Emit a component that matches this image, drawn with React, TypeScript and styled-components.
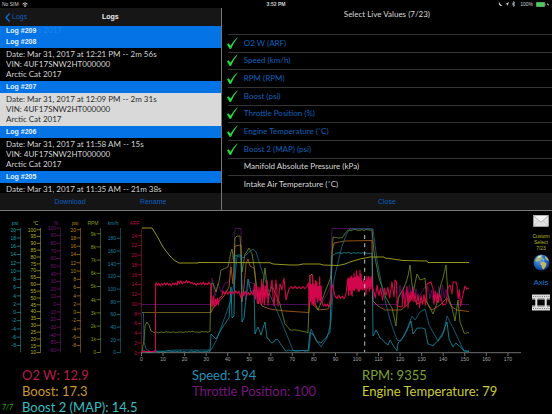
import React from "react";
import styled, { createGlobalStyle } from "styled-components";

const HUMANIST = `Lato, "Open Sans", sans-serif`;
const SANS = `"Liberation Sans", Arial, sans-serif`;

const Global = createGlobalStyle`
  * { box-sizing: border-box; }
  body { margin: 0; background: #000; color: #ddd; font-family: ${HUMANIST}; }
  button { border: 0; padding: 0; margin: 0; background: none; font: inherit; color: inherit; cursor: pointer; }
  ul { list-style: none; margin: 0; padding: 0; }
`;

const Page = styled.main`
  min-height: 100vh;
  display: flex;
  flex-direction: column;
  background: #000;
  overflow: hidden;
`;

const StatusBar = styled.header`
  display: grid;
  grid-template-columns: 1fr auto 1fr;
  align-items: center;
  height: 8px;
  padding: 0 2px;
  font: 5px/8px ${SANS};
  color: #d0d0d0;
`;

const StatusGroup = styled.div<{ $end?: boolean }>`
  display: flex;
  align-items: center;
  gap: 3px;
  justify-content: ${(p) => (p.$end ? "flex-end" : "flex-start")};
`;

const Clock = styled.time`
  font-weight: 700;
`;

const Panels = styled.div`
  display: grid;
  grid-template-columns: 2fr 3fr;
  height: 203px;
  border-bottom: 1px solid #777;
`;

const Panel = styled.section`
  display: flex;
  flex-direction: column;
  min-width: 0;
  min-height: 0;
`;

const NavBar = styled.nav`
  display: grid;
  grid-template-columns: 1fr auto 1fr;
  align-items: center;
  flex: none;
  height: 18px;
  padding: 0 5px;
  background: #161616;
  font: 7px/18px ${SANS};
`;

const BackButton = styled.button`
  display: flex;
  align-items: center;
  gap: 2px;
  color: #0b5fc0;
`;

const NavTitle = styled.h1`
  margin: 0;
  font: 700 7px/18px ${SANS};
  color: #eee;
`;

const Scroll = styled.div`
  flex: 1;
  min-height: 0;
  overflow: hidden;
`;

const LogHeading = styled.h2<{ $tucked?: boolean }>`
  margin: 0;
  height: ${(p) => (p.$tucked ? 10 : 12)}px;
  padding-left: 6px;
  background: #0373e6;
  color: #e6f1ff;
  font: 700 7px/${(p) => (p.$tucked ? 8 : 12)}px ${SANS};
`;

const Ghost = styled.span`
  font: 8px/8px ${HUMANIST};
  color: #1c84ee;
`;

const LogEntry = styled.button<{ $selected?: boolean }>`
  display: block;
  width: 100%;
  padding: 1px 6px 2px;
  text-align: left;
  white-space: nowrap;
  font: 8px/10px ${HUMANIST};
  background: ${(p) => (p.$selected ? "#d9d9d9" : "#000")};
  color: ${(p) => (p.$selected ? "#2c2c2c" : "#d4d4d4")};
`;

const Line = styled.span`
  display: block;
`;

const Toolbar = styled.div`
  display: flex;
  justify-content: space-evenly;
  align-items: center;
  flex: none;
  height: 17px;
  background: #151515;
  font: 7px/17px ${SANS};
  color: #0b5fc0;
`;

const ValuesPanel = styled(Panel)`
  border-left: 1px solid #777;
`;

const ValuesTitle = styled.h2`
  margin: 0;
  flex: none;
  height: 26px;
  font: 8px/12px ${HUMANIST};
  color: #d8d8d8;
  text-align: center;
`;

const ValueList = styled.ul`
  flex: 1;
  display: grid;
  grid-auto-rows: 1fr;
`;

const ValueRow = styled.li`
  display: flex;
  padding-left: 4px;
`;

const ValueLabel = styled.label<{ $on: boolean }>`
  flex: 1;
  display: flex;
  align-items: center;
  gap: 6px;
  font: 8px/12px ${HUMANIST};
  color: ${(p) => (p.$on ? "#0d62bb" : "#d8d8d8")};
  background: linear-gradient(#343434, #343434) 2px 0 / 100% 1px no-repeat;
`;

const Tick = styled.span`
  display: grid;
  width: 12px;
  height: 14px;
  > * { grid-area: 1 / 1; }
`;

const TickInput = styled.input`
  appearance: none;
  margin: 0;
  width: 12px;
  height: 14px;
`;

const ChartArea = styled.section`
  display: grid;
  grid-template-columns: 1fr 22px;
  padding-top: 1px;
`;

const Plot = styled.svg`
  display: block;
  width: 100%;
  font-family: ${SANS};
  font-size: 5px;
`;

const SideTools = styled.aside`
  display: flex;
  flex-direction: column;
  align-items: center;
  padding-top: 3px;
`;

const IconButton = styled.button<{ $gap?: number }>`
  display: flex;
  margin-top: ${(p) => p.$gap ?? 0}px;
`;

const SelectButton = styled.button`
  margin-top: 6px;
  font: 5px/6px ${SANS};
  color: #b7b72a;
`;

const AxisButton = styled.button`
  margin-top: 7px;
  font: 8px/10px ${SANS};
  color: #1478d8;
`;

const Readouts = styled.section`
  display: grid;
  grid-template-columns: 22px repeat(3, 170px);
  grid-auto-rows: 16px;
  align-items: center;
  padding-top: 5px;
  font: 13px/16px ${HUMANIST};
  white-space: nowrap;
`;

const Readout = styled.span<{ $color: string; $col: number }>`
  grid-column: ${(p) => p.$col};
  color: ${(p) => p.$color};
`;

const Count = styled.span`
  grid-column: 1;
  padding-left: 2px;
  font: italic 7px/16px ${HUMANIST};
  color: #25b416;
`;

type Pt = [number, number];

const path = (pts: Pt[]) => "M" + pts.map(([x, y]) => `${x.toFixed(1)} ${y.toFixed(1)}`).join("L");

const noise = (seed: number) => {
  let s = seed;
  return () => {
    s = (s * 16807) % 2147483647;
    return s / 2147483647;
  };
};

/* Alternates between a low and a high envelope, as a fast oscillating sensor does. */
const jag = (x0: number, x1: number, top: number, bottom: number, step: number, seed: number): Pt[] => {
  const rnd = noise(seed * 7919);
  const out: Pt[] = [];
  let up = true;
  for (let x = x0; x <= x1; x += step) {
    const r = rnd() * 0.35 * (bottom - top);
    out.push([x, up ? top + r : bottom - r]);
    up = !up;
  }
  return out;
};

const rough = (pts: Pt[], amp: number, seed: number): Pt[] => {
  const rnd = noise(seed * 104729);
  const out: Pt[] = [];
  pts.forEach((p, i) => {
    out.push(p);
    const n = pts[i + 1];
    if (!n) return;
    const count = Math.floor((n[0] - p[0]) / 1.5);
    for (let k = 1; k < count; k++) {
      const t = k / count;
      out.push([p[0] + (n[0] - p[0]) * t, p[1] + (n[1] - p[1]) * t + (rnd() - 0.5) * 2 * amp]);
    }
  });
  return out;
};

const temperature: Pt[] = [
  [142, 16], [152, 16], [157, 24], [163, 35], [169, 43], [174, 48], [179, 51], [198, 51], [198, 50.5], [270, 50.7],
  [273, 52], [290, 53], [298, 53], [303, 52], [320, 52], [323, 53], [338, 53.5], [345, 52], [350, 50], [360, 47],
  [370, 45], [384, 45], [385, 46], [393, 47], [403, 48.5], [427, 49], [428, 50.5], [469, 50.5],
];

const throttle: Pt[] = [
  [142, 92.5], [211, 92.5], [212, 66], [215, 84], [218, 72], [221, 80], [225, 71], [229, 70], [231, 50], [234, 40], [235, 16.5],
  [241, 16.5], [242, 72], [246, 88], [249, 70], [255, 72], [260, 88], [264, 92.5], [309, 92.5], [310, 74], [313, 88], [321, 92],
  [326, 84], [330, 76], [332, 16.5], [372, 16.5], [373, 92.5], [398, 92.5], ...jag(400, 418, 72, 88, 1.6, 4), [424, 76],
  ...jag(428, 447, 72, 93, 1.8, 6), [450, 92.5], [469, 92.5],
];

const boost: Pt[] = [
  [211, 100.5], [213, 96], [224, 84], [229, 75], [231, 55], [233, 72], [235, 34], [241, 33], [242, 90], [244, 75], [246, 52],
  [248, 47], [250, 54], [254, 56], [257, 80], [262, 94], [270, 97], [285, 99], [309, 100.5], [310, 82], [313, 92], [318, 98],
  [328, 97], [331, 92], [332, 40], [334, 31], [345, 29], [372, 28.5], [373, 89], [378, 94], [385, 98], [401, 98], [408, 92],
  [412, 85], [418, 92], [425, 88], [432, 98], [440, 93], [447, 86], [452, 95], [457, 98], [469, 99.5],
];

const rpm: Pt[] = [
  [142, 139], [144, 128], [145, 114], [147, 110], [149, 113], [151, 119], [154, 120.5], [210, 119.5], [211, 72], [213, 71],
  [216, 80], [219, 70], [221, 58], [228, 55], [231, 40], [232, 37], [234, 50], [235, 26], [237, 24], [240, 24], [242, 60],
  [245, 42], [249, 36], [252, 42], [255, 60], [258, 92], [262, 80], [265, 56], [268, 84], [272, 74], [280, 92], [285, 112],
  [290, 118], [300, 119], [308, 121], [310, 64], [312, 62], [314, 88], [318, 98], [322, 88], [327, 75], [331, 64], [333, 25],
  [342, 26], [348, 18], [372, 18], [374, 40], [379, 66], [386, 86], [392, 96], [396, 114], [398, 87], [405, 73], [408, 64],
  [410, 53], [413, 82], [417, 62], [420, 68], [425, 66], [427, 90], [433, 102], [438, 88], [441, 72], [443, 66],
  [446, 53], [448, 83], [452, 96], [455, 109], [458, 88], [460, 110], [464, 121], [469, 121],
];

const speed: Pt[] = [
  [142, 100.5], [143.5, 100.5], [144, 130], [146, 137], [150, 139.5], [165, 139], [175, 138], [211, 138], [217, 127], [223, 110],
  [231, 88], [235, 66], [237, 44], [243, 46], [249, 40], [253, 37], [256, 40], [263, 62], [270, 83], [280, 106], [293, 138.5],
  [309, 138.5], [311, 117], [316, 128], [321, 135], [327, 126], [331, 110], [334, 67], [342, 34], [347, 21], [350, 17], [373, 17],
  [377, 48], [383, 80], [390, 108], [397, 128], [401, 129], [407, 117], [412, 104], [415, 108], [420, 100], [425, 97], [429, 113],
  [438, 129], [444, 118], [447, 104], [455, 120], [464, 139], [469, 139],
];

const boost2: Pt[] = [
  [142, 139.5], [210, 139.5], [211, 122], [213, 124], [216, 127], [222, 116], [229, 106], [231, 75], [232, 106], [234, 104],
  [235, 43], [241, 43], [242, 110], [244, 106], [247, 76], [248, 67], [251, 80], [254, 78], [255, 122], [258, 115], [261, 123],
  [265, 110], [267, 126], [272, 131], [277, 127], [282, 134], [285, 138.5], [308, 139], [310, 120], [313, 122], [317, 130],
  [321, 131], [326, 126], [330, 120], [332, 44], [337, 41], [372, 41], [373, 124], [376, 118], [380, 126], [388, 133],
  [390, 128], [394, 135], [397, 139], [398, 131], [404, 124], [408, 116], [411, 109], [413, 122], [417, 116], [425, 117],
  [428, 132], [433, 134], [442, 124], [447, 110], [449, 127], [453, 135], [456, 131], [458, 133], [463, 138], [469, 139.5],
];

const oxygen: Pt[] = [
  [142, 139.5], [155.5, 139.5], [155.6, 73],
  ...jag(156, 178, 70.5, 74, 1.4, 1), ...jag(178, 192, 68.5, 72, 1.4, 2), ...jag(192, 210, 70, 73.5, 1.4, 3),
  [211, 73], [211.5, 94], ...jag(212, 220, 83, 96, 0.9, 5), [222, 84], ...jag(223, 239, 78, 83, 1.6, 7), [241, 86],
  ...jag(242, 254, 79, 84, 1.6, 8), ...jag(254.5, 268, 66, 96, 0.9, 9), [269, 84], [271, 74], [272, 68], [273, 84], [274, 94],
  [276, 68], [278, 94], [280, 72], [282, 78], [284, 66], [286, 88], [289, 77], ...jag(291, 308, 74, 77, 2, 10),
  ...jag(308.5, 322, 63, 96, 0.7, 11), ...jag(322.5, 330, 91, 95, 1.2, 12), [332, 72], [334, 80], ...jag(335, 347, 83, 87, 1.8, 13),
  ...jag(348, 362, 58, 84, 0.6, 14), ...jag(362, 373, 63, 83, 0.8, 15), ...jag(373.5, 390, 72, 88, 1.8, 16),
  [392, 70], [394, 85], [395, 68], [396.5, 70], [397, 94], [402, 95], [403, 78], [405, 95], ...jag(407, 415, 74, 96, 1, 17),
  ...jag(415, 426, 80, 96, 1.5, 21), [427, 72], [431, 70], ...jag(433, 440, 76, 97, 1.1, 18), [443, 93], [446, 92],
  [448, 76], [450, 73], [452, 82], [453, 70], [456, 70], ...jag(457, 461, 72, 94, 1.2, 20), [463, 82], [465, 74], [467, 77], [469, 76],
];

const series = [
  { color: "#5f1270", d: path(throttle), w: 0.8 },
  { color: "#8f8420", d: "M142 100.5H211V88", w: 0.7 },
  { color: "#b5651d", d: path(boost), w: 0.8 },
  { color: "#76911c", d: path(rough(rpm, 0.6, 3)), w: 0.8 },
  { color: "#12708e", d: path(speed), w: 0.8 },
  { color: "#1598a8", d: path(rough(boost2, 0.7, 5)), w: 0.8 },
  { color: "#d1064c", d: path(oxygen), w: 1.1 },
  { color: "#a5a520", d: path(temperature), w: 0.9 },
];

const axes = [
  { title: "psi", x: 20.5, color: "#18a0ae", top: 17.7, gap: 8.27, from: 20, by: -2, n: 15 },
  { title: "°C", x: 40.5, color: "#b5b522", top: 17.7, gap: 6.83, from: 100, by: -5, n: 19 },
  { title: "%", x: 60.5, color: "#74157f", top: 16, gap: 7.63, from: 100, by: -10, n: 17 },
  { title: "psi", x: 80.5, color: "#bb841a", top: 17.7, gap: 8.27, from: 20, by: -2, n: 15 },
  { title: "RPM", x: 100.5, color: "#7d9e20", top: 21.7, gap: 13.2, from: 9, by: -1, n: 10, unit: "k" },
  { title: "km/h", x: 120.5, color: "#1780a2", top: 26.3, gap: 12.7, from: 180, by: -20, n: 10 },
  { title: "ARF", x: 141.5, color: "#b80c48", top: 23.7, gap: 9.75, from: 24, by: -2, n: 13 },
];

const Chart = () => (
  <Plot viewBox="0 0 530 150" role="img" aria-label="Log values over time">
    {axes.map((a, i) => (
      <g key={i} fill={a.color}>
        <text x={a.x - 2} y={13} textAnchor="end">{a.title}</text>
        <path d={`M${a.x} 16V140.5`} stroke={a.color} strokeWidth="0.7" opacity="0.75" />
        {Array.from({ length: a.n }, (_, k) => {
          const v = a.from + a.by * k;
          const y = a.top + a.gap * k;
          return (
            <g key={k}>
              <path d={`M${a.x - 4} ${y}H${a.x}`} stroke={a.color} strokeWidth="0.7" />
              <text x={a.x - 4.5} y={y + 1.8} textAnchor="end">{v === 0 ? "0" : `${v}${a.unit ?? ""}`}</text>
            </g>
          );
        })}
      </g>
    ))}
    {series.map((s, i) => (
      <path key={i} d={s.d} fill="none" stroke={s.color} strokeWidth={s.w} strokeLinejoin="round" />
    ))}
    <path d="M364.7 23V140" stroke="#c4c4c4" strokeWidth="1" strokeDasharray="4 4.2" />
    <path d="M141 140.7H521" stroke="#8c8c8c" strokeWidth="0.8" />
    {Array.from({ length: 18 }, (_, k) => (
      <g key={k} fill="#a8a8a8">
        <path d={`M${141.5 + k * 21.55} 141V144`} stroke="#8c8c8c" strokeWidth="0.8" />
        <text x={141.5 + k * 21.55} y={149} textAnchor="middle">{k * 10}</text>
      </g>
    ))}
  </Plot>
);

const logs = [
  { id: 208, date: "Mar 31, 2017 at 12:21 PM -- 2m 56s" },
  { id: 207, date: "Mar 31, 2017 at 12:09 PM -- 2m 31s", selected: true },
  { id: 206, date: "Mar 31, 2017 at 11:58 AM -- 15s" },
  { id: 205, date: "Mar 31, 2017 at 11:35 AM -- 21m 38s", clipped: true },
];

const values = [
  { name: "O2 W (ARF)", on: true },
  { name: "Speed (km/h)", on: true },
  { name: "RPM (RPM)", on: true },
  { name: "Boost (psi)", on: true },
  { name: "Throttle Position (%)", on: true },
  { name: "Engine Temperature (˚C)", on: true },
  { name: "Boost 2 (MAP) (psi)", on: true },
  { name: "Manifold Absolute Pressure (kPa)", on: false },
  { name: "Intake Air Temperature (˚C)", on: false },
];

const readouts = [
  { text: "O2 W: 12.9", color: "#b81a50", col: 2 },
  { text: "Speed: 194", color: "#2391b5", col: 3 },
  { text: "RPM: 9355", color: "#7fa332", col: 4 },
  { text: "Boost: 17.3", color: "#cc982c", col: 2 },
  { text: "Throttle Position: 100", color: "#78147f", col: 3 },
  { text: "Engine Temperature: 79", color: "#cccc38", col: 4 },
];

const Wifi = () => (
  <svg width="6" height="5" viewBox="0 0 12 10" fill="none" stroke="#d0d0d0" strokeWidth="2">
    <path d="M1 4Q6-1 11 4M3 6.5Q6 3.5 9 6.5" />
    <circle cx="6" cy="8.5" r="0.8" />
  </svg>
);

const StatusIcons = () => (
  <svg width="19" height="6" viewBox="0 0 19 6" fill="#d0d0d0">
    <path d="M2 1A2 2 0 1 0 4.5 4 2.2 2.2 0 0 1 2 1Z" />
    <path d="M7 3.2 11 1 9.5 5 9 3.2Z" />
    <path d="M14 1.8 17 4.2 15.5 5.5V.5L17 1.8 14 4.2" fill="none" stroke="#d0d0d0" strokeWidth="0.6" />
  </svg>
);

const Battery = () => (
  <svg width="14" height="5" viewBox="0 0 14 5">
    <rect x="0.3" y="0.3" width="8.4" height="4.4" rx="0.8" fill="#4fc95d" stroke="#8fca96" strokeWidth="0.4" />
    <path d="M9.2 1.7V3.3" stroke="#aaa" strokeWidth="0.6" />
    <path d="M12 .8 11 2.7H12L11.8 4.4 13 2.3H12Z" fill="#ddd" />
  </svg>
);

const Check = () => (
  <svg width="12" height="14" viewBox="0 0 12 14" aria-hidden="true">
    <path d="M1 8.2 2.5 7.2 4.5 9.8Q7.3 4.6 11.3 1.4L11.7 1.8Q7.8 6.3 5.1 12.7L3.7 13Z" fill="#22e03c" />
  </svg>
);

const Mail = () => (
  <svg width="16" height="12" viewBox="0 0 16 12">
    <rect x="0.5" y="0.5" width="15" height="11" fill="#e2e2e2" stroke="#b9b9b9" strokeWidth="0.6" />
    <path d="M.8 11 6 5.5M15.2 11 10 5.5" stroke="#bcbcbc" strokeWidth="0.6" />
    <path d="M.7.8 8 7.3 15.3.8" fill="#f4f4f4" stroke="#999" strokeWidth="0.7" />
  </svg>
);

const Globe = () => (
  <svg width="17" height="17" viewBox="0 0 34 34">
    <defs>
      <radialGradient id="sea" cx="0.4" cy="0.35" r="0.7">
        <stop offset="0" stopColor="#5aa2ea" />
        <stop offset="0.6" stopColor="#2164bd" />
        <stop offset="1" stopColor="#0a2f70" />
      </radialGradient>
    </defs>
    <circle cx="17" cy="17" r="16" fill="url(#sea)" />
    <path d="M8 6 13 3 19 2 17 6 20 8 17 11 14 12 15 15 11 14 7 16 4 13Z" fill="#a6b779" />
    <path d="M16 16 21 15 27 19 26 24 21 31 18 28 17 23 14 20Z" fill="#c4b56c" />
    <path d="M24 4 29 8 32 14 27 12 25 9Z" fill="#bfb676" />
    <path d="M9 6 15 3 16 5 11 8ZM19 10 23 12 20 13Z" fill="#e7eee9" />
  </svg>
);

const Film = () => (
  <svg width="18" height="17" viewBox="0 0 18 17">
    <path d="M0 .5H18V5.5H0ZM0 11.5H18V16.5H0Z" fill="#dcdcdc" />
    <path d="M1 2.5H18M1 14.5H18" stroke="#777" strokeWidth="1" strokeDasharray="1 1.2" />
    <path d="M3.3 5H5.3V12H3.3ZM12.7 5H14.7V12H12.7Z" fill="#e4e4e4" />
    <path d="M0 4.5H3V5.5H0ZM5.5 4.5H12.5V5.5H5.5ZM15 4.5H18V5.5H15ZM0 11.5H3V12.5H0ZM5.5 11.5H12.5V12.5H5.5ZM15 11.5H18V12.5H15Z" fill="#666" />
  </svg>
);

export default function App() {
  return (
    <Page>
      <Global />
      <StatusBar>
        <StatusGroup>No SIM <Wifi /></StatusGroup>
        <Clock>3:52 PM</Clock>
        <StatusGroup $end><StatusIcons />100% <Battery /></StatusGroup>
      </StatusBar>
      <Panels>
        <Panel>
          <NavBar>
            <BackButton>
              <svg width="5" height="9" viewBox="0 0 5 9" fill="none" stroke="#0b6fde" strokeWidth="1.3">
                <path d="M4.5.5 1 4.5 4.5 8.5" />
              </svg>
              Logs
            </BackButton>
            <NavTitle>Logs</NavTitle>
          </NavBar>
          <Scroll>
            <LogHeading $tucked>Log #209<Ghost aria-hidden="true"> t 2017</Ghost></LogHeading>
            {logs.map((l) => (
              <React.Fragment key={l.id}>
                <LogHeading>Log #{l.id}</LogHeading>
                <LogEntry $selected={l.selected}>
                  <Line>Date: {l.date}</Line>
                  {!l.clipped && <Line>VIN: 4UF17SNW2HT000000</Line>}
                  {!l.clipped && <Line>Arctic Cat 2017</Line>}
                </LogEntry>
              </React.Fragment>
            ))}
          </Scroll>
          <Toolbar>
            <button>Download</button>
            <button>Rename</button>
          </Toolbar>
        </Panel>
        <ValuesPanel>
          <ValuesTitle>Select Live Values (7/23)</ValuesTitle>
          <ValueList>
            {values.map((v) => (
              <ValueRow key={v.name}>
                <ValueLabel $on={v.on}>
                  <Tick>
                    <TickInput type="checkbox" defaultChecked={v.on} />
                    {v.on && <Check />}
                  </Tick>
                  {v.name}
                </ValueLabel>
              </ValueRow>
            ))}
          </ValueList>
          <Toolbar>
            <button>Close</button>
          </Toolbar>
        </ValuesPanel>
      </Panels>
      <ChartArea>
        <Chart />
        <SideTools>
          <IconButton aria-label="Mail"><Mail /></IconButton>
          <SelectButton><Line>Custom</Line><Line>Select</Line><Line>7/23</Line></SelectButton>
          <IconButton $gap={3} aria-label="Map"><Globe /></IconButton>
          <AxisButton>Axis</AxisButton>
          <IconButton $gap={6} aria-label="Video"><Film /></IconButton>
        </SideTools>
      </ChartArea>
      <Readouts>
        {readouts.map((r) => (
          <Readout key={r.text} $color={r.color} $col={r.col}>{r.text}</Readout>
        ))}
        <Count>7/7</Count>
        <Readout $color="#37bec2" $col={2}>Boost 2 (MAP): 14.5</Readout>
      </Readouts>
    </Page>
  );
}
